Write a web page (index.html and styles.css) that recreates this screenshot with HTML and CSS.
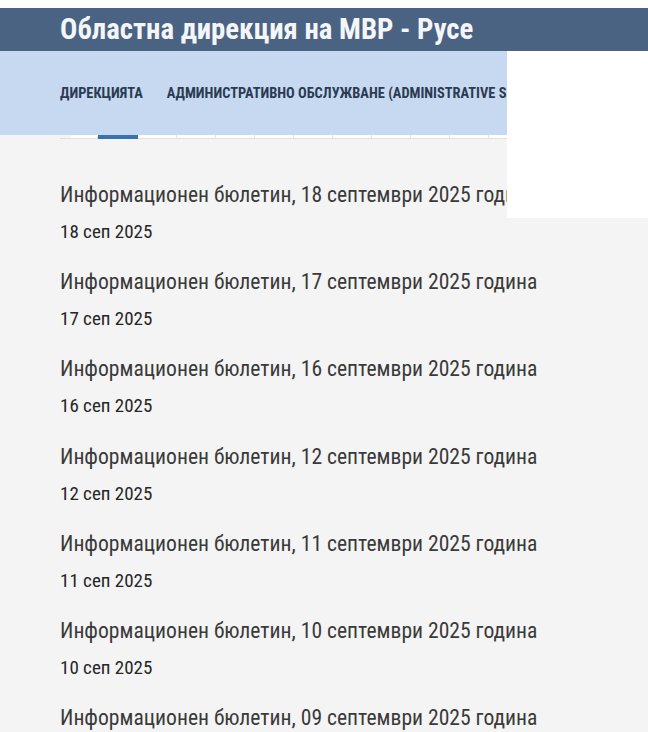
FILE: index.html
```html
<!DOCTYPE html>
<html lang="bg">
<head>
<meta charset="utf-8">
<title>Областна дирекция на МВР - Русе</title>
<link rel="stylesheet" href="styles.css">
</head>
<body>
<div class="page">
  <header class="site-header">
    <h1 class="site-title">Областна дирекция на МВР - Русе</h1>
  </header>
  <nav class="main-nav">
    <ul class="nav-list">
      <li class="nav-item">ДИРЕКЦИЯТА</li>
      <li class="nav-item">АДМИНИСТРАТИВНО ОБСЛУЖВАНЕ (ADMINISTRATIVE SERVICES)</li>
    </ul>
  </nav>
  <div class="tab-strip">
    <span class="tab"></span>
    <span class="tab active"></span>
    <span class="tab"></span>
    <span class="tab"></span>
    <span class="tab"></span>
    <span class="tab"></span>
    <span class="tab"></span>
    <span class="tab"></span>
    <span class="tab"></span>
    <span class="tab"></span>
    <span class="tab"></span>
    <span class="tab"></span>
    <span class="tab"></span>
    <span class="tab"></span>
    <span class="tab"></span>
  </div>
  <main class="content">
    <article class="news-item">
      <h2 class="news-title">Информационен бюлетин, 18 септември 2025 година</h2>
      <div class="news-date">18 сеп 2025</div>
    </article>
    <article class="news-item">
      <h2 class="news-title">Информационен бюлетин, 17 септември 2025 година</h2>
      <div class="news-date">17 сеп 2025</div>
    </article>
    <article class="news-item">
      <h2 class="news-title">Информационен бюлетин, 16 септември 2025 година</h2>
      <div class="news-date">16 сеп 2025</div>
    </article>
    <article class="news-item">
      <h2 class="news-title">Информационен бюлетин, 12 септември 2025 година</h2>
      <div class="news-date">12 сеп 2025</div>
    </article>
    <article class="news-item">
      <h2 class="news-title">Информационен бюлетин, 11 септември 2025 година</h2>
      <div class="news-date">11 сеп 2025</div>
    </article>
    <article class="news-item">
      <h2 class="news-title">Информационен бюлетин, 10 септември 2025 година</h2>
      <div class="news-date">10 сеп 2025</div>
    </article>
    <article class="news-item">
      <h2 class="news-title">Информационен бюлетин, 09 септември 2025 година</h2>
    </article>
  </main>
  <div class="overlay-box"></div>
</div>
</body>
</html>
```
FILE: styles.css
```css
html, body {
  margin: 0;
  padding: 0;
  background: #f4f4f4;
  overflow: hidden;
}
body {
  font-family: "Roboto Condensed", Roboto, sans-serif;
  font-stretch: condensed;
}
.page {
  position: relative;
  padding-top: 8px;
  background: #ffffff;
  height: 732px;
  overflow: hidden;
}
.site-header {
  background: #4a6383;
  height: 43px;
  padding-left: 60px;
}
.site-title {
  margin: 0;
  font-size: 28.8px;
  line-height: 42px;
  font-weight: 700;
  color: #f4f6f9;
  white-space: nowrap;
}
.main-nav {
  background: #c6d9f0;
  height: 84px;
  width: 447px;
  display: flex;
  align-items: center;
  padding-left: 60px;
  overflow: hidden;
}
.nav-list {
  list-style: none;
  margin: 0;
  padding: 0;
  display: flex;
  gap: 24px;
  white-space: nowrap;
}
.nav-item {
  font-size: 14.4px;
  font-weight: 700;
  color: #2b3b52;
  line-height: 16px;
  padding-top: 1px;
}
.tab-strip {
  display: flex;
  background: #f4f4f4;
  padding-left: 60px;
  height: 4px;
}
.tab {
  flex: 0 0 39px;
  height: 3px;
  background: #ffffff;
  border-bottom: 1px solid #e2dfd3;
  box-shadow: inset -1px 0 0 #e6e6e6;
}
.tab:first-child {
  flex-basis: 38px;
  background: linear-gradient(110deg, #f4f4f4 0, #f4f4f4 30%, #ffffff 30%);
}
.tab.active {
  flex-basis: 40px;
  background: #3a73ab;
  border-bottom-color: #3a73ab;
  box-shadow: none;
}
.content {
  background: #f4f4f4;
  padding: 41px 0 0 60px;
  min-height: 700px;
}
.news-item {
  margin-bottom: 22.2px;
}
.news-title {
  margin: 0 0 9px;
  font-size: 21.6px;
  line-height: 30px;
  font-weight: 400;
  color: #3a3a3a;
  white-space: nowrap;
}
.news-date {
  font-size: 19px;
  line-height: 26px;
  color: #262626;
}
.overlay-box {
  position: absolute;
  top: 51px;
  left: 507px;
  right: 0;
  height: 167px;
  background: #ffffff;
}
```
